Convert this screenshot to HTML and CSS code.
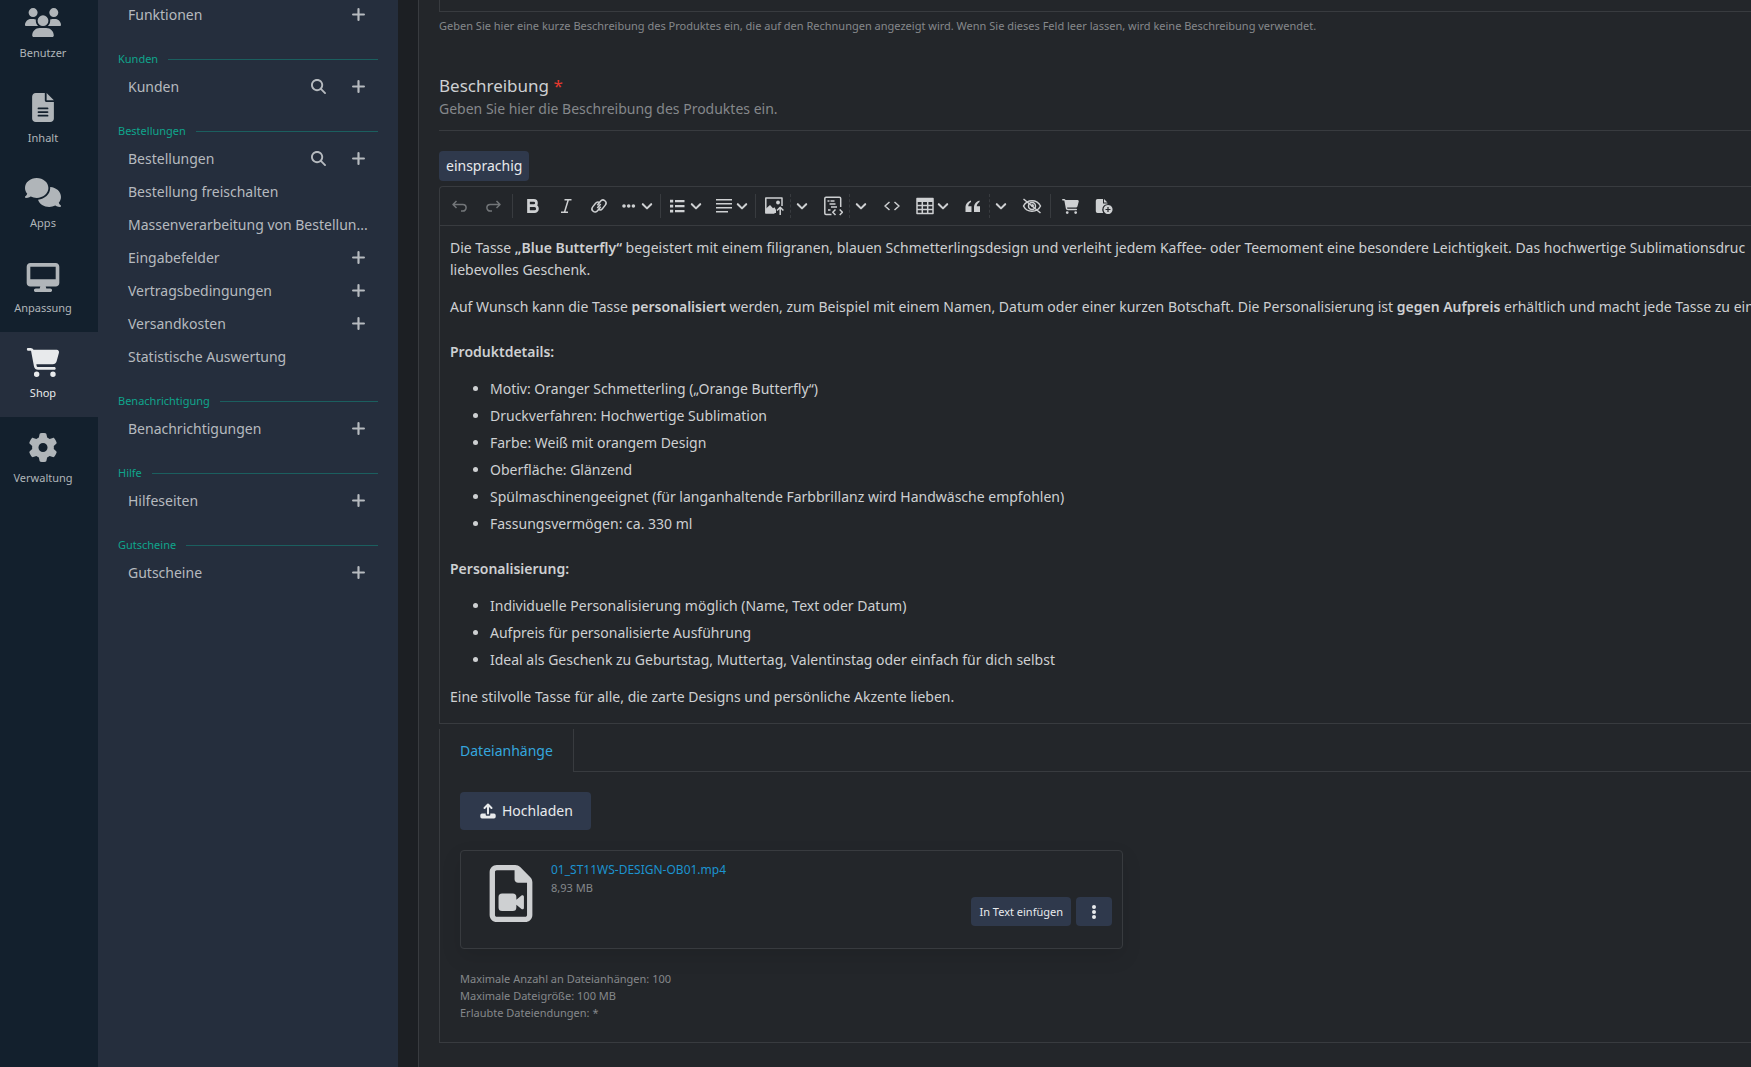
FILE: index.html
```html
<!DOCTYPE html>
<html lang="de">
<head>
  <meta charset="UTF-8">
  <meta name="viewport" content="width=device-width, initial-scale=1.0">
  <title>Produkt bearbeiten</title>
  <link rel="stylesheet" href="styles.css">
</head>
<body>
  <!-- shared icons -->
  <svg class="sprite" aria-hidden="true">
    <symbol id="plus" viewBox="0 0 12 12"><path d="M6 1v10M1 6h10" stroke="currentColor" stroke-width="2" stroke-linecap="round"/></symbol>
    <symbol id="search" viewBox="0 0 512 512"><path d="M416 208c0 45.900-14.900 88.300-40 122.700L502.600 457.400c12.500 12.500 12.500 32.800 0 45.300s-32.800 12.500-45.300 0L330.700 376c-34.400 25.200-76.800 40-122.700 40C93.100 416 0 322.900 0 208S93.100 0 208 0S416 93.100 416 208zM208 352a144 144 0 1 0 0-288 144 144 0 1 0 0 288z" fill="currentColor"/></symbol>
    <symbol id="chevron" viewBox="0 0 10 10"><path d="M1.500 3.500L5 7l3.500-3.500" fill="none" stroke="currentColor" stroke-width="1.700" stroke-linecap="round" stroke-linejoin="round"/></symbol>
    <symbol id="cart" viewBox="0 0 576 512"><path d="M0 24C0 10.700 10.700 0 24 0H69.500c22 0 41.500 12.800 50.600 32h411c26.300 0 45.500 25 38.600 50.400l-41 152.300c-8.500 31.400-37 53.300-69.500 53.300H170.700l5.400 28.500c2.200 11.300 12.100 19.500 23.600 19.500H488c13.300 0 24 10.700 24 24s-10.700 24-24 24H199.700c-34.600 0-64.300-24.600-70.700-58.500L77.400 54.500c-.7-3.800-4-6.500-7.900-6.500H24C10.700 48 0 37.300 0 24zM128 464a48 48 0 1 1 96 0 48 48 0 1 1-96 0zm336-48a48 48 0 1 1 0 96 48 48 0 1 1 0-96z" fill="currentColor"/></symbol>
  </svg>

  <nav class="rail">
    <a href="#">
      <svg viewBox="0 0 640 512"><path d="M144 160A80 80 0 1 0 144 0a80 80 0 1 0 0 160zm368 0A80 80 0 1 0 512 0a80 80 0 1 0 0 160zM0 298.700C0 310.400 9.600 320 21.300 320H234.700c.2 0 .4 0 .7 0c-26.600-23.500-43.300-57.800-43.300-96c0-7.600 .7-15 1.900-22.300c-13.600-6.300-28.700-9.700-44.600-9.700H106.700C47.800 192 0 239.800 0 298.700zM405.300 320H618.700c11.800 0 21.300-9.600 21.300-21.300C640 239.800 592.200 192 533.300 192H490.700c-15.900 0-31 3.500-44.600 9.700c1.300 7.200 1.900 14.700 1.900 22.300c0 38.200-16.800 72.500-43.300 96c.2 0 .4 0 .7 0zM224 224a96 96 0 1 1 192 0 96 96 0 1 1-192 0zM128 485.300C128 411.700 187.700 352 261.300 352H378.700C452.300 352 512 411.700 512 485.300c0 14.700-11.900 26.700-26.700 26.700H154.700c-14.700 0-26.700-11.900-26.700-26.700z"/></svg>
      Benutzer
    </a>
    <a href="#">
      <svg viewBox="0 0 384 512"><path d="M64 0C28.700 0 0 28.700 0 64V448c0 35.300 28.700 64 64 64H320c35.300 0 64-28.700 64-64V160H256c-17.700 0-32-14.300-32-32V0H64zM256 0V128H384L256 0zM112 256H272c8.800 0 16 7.200 16 16s-7.200 16-16 16H112c-8.800 0-16-7.200-16-16s7.200-16 16-16zm0 64H272c8.800 0 16 7.200 16 16s-7.200 16-16 16H112c-8.800 0-16-7.200-16-16s7.200-16 16-16zm0 64H272c8.800 0 16 7.200 16 16s-7.200 16-16 16H112c-8.800 0-16-7.200-16-16s7.200-16 16-16z"/></svg>
      Inhalt
    </a>
    <a href="#">
      <svg viewBox="0 0 640 512"><path d="M208 352c114.900 0 208-78.800 208-176S322.900 0 208 0S0 78.800 0 176c0 38.600 14.700 74.300 39.600 103.400c-3.500 9.400-8.700 17.700-14.200 24.700c-4.800 6.200-9.700 11-13.300 14.300c-1.800 1.600-3.300 2.900-4.300 3.700l-1.300 1C1 327.200-1.400 334.400 .8 340.900S9.100 352 16 352c21.800 0 43.800-5.600 62.100-12.500c9.200-3.500 17.800-7.400 25.200-11.400C134.100 343.300 169.800 352 208 352zM448 176c0 112.300-99.100 196.900-216.500 207C255.800 457.400 336.400 512 432 512c38.200 0 73.900-8.700 104.700-23.900c7.500 4 16 7.900 25.200 11.400c18.300 6.900 40.300 12.500 62.100 12.500c6.900 0 13.100-4.500 15.200-11.100c2.100-6.600-.2-13.800-5.800-17.900l-1.300-1c-1-.8-2.500-2-4.300-3.700c-3.600-3.300-8.500-8.100-13.300-14.300c-5.500-7-10.700-15.400-14.200-24.700c24.900-29 39.600-64.700 39.600-103.400c0-92.800-84.900-168.900-192.600-175.500c.4 5.100 .6 10.300 .6 15.500z"/></svg>
      Apps
    </a>
    <a href="#">
      <svg viewBox="0 0 576 512"><path d="M64 0C28.700 0 0 28.700 0 64V352c0 35.300 28.700 64 64 64H240l-10.700 32H160c-17.700 0-32 14.300-32 32s14.300 32 32 32H416c17.700 0 32-14.300 32-32s-14.300-32-32-32H346.700L336 416H512c35.300 0 64-28.700 64-64V64c0-35.300-28.700-64-64-64H64zM512 64V288H64V64H512z"/></svg>
      Anpassung
    </a>
    <a href="#" class="active">
      <svg viewBox="0 0 576 512"><use href="#cart"/></svg>
      Shop
    </a>
    <a href="#">
      <svg viewBox="0 0 512 512"><path d="M495.900 166.600c3.200 8.700 .5 18.400-6.400 24.600l-43.300 39.400c1.100 8.300 1.700 16.800 1.700 25.400s-.6 17.100-1.700 25.400l43.300 39.400c6.900 6.200 9.600 15.900 6.400 24.600c-4.400 11.900-9.700 23.300-15.800 34.300l-4.700 8.100c-6.600 11-14 21.400-22.100 31.200c-5.900 7.200-15.700 9.600-24.500 6.800l-55.700-17.700c-13.400 10.300-28.200 18.900-44 25.400l-12.500 57.100c-2 9.100-9 16.300-18.200 17.800c-13.800 2.300-28 3.500-42.500 3.500s-28.700-1.200-42.500-3.500c-9.200-1.500-16.200-8.700-18.200-17.800l-12.500-57.100c-15.800-6.500-30.600-15.100-44-25.400L83.100 425.900c-8.800 2.800-18.600 .3-24.500-6.800c-8.100-9.800-15.500-20.200-22.100-31.200l-4.700-8.100c-6.100-11-11.400-22.400-15.800-34.300c-3.200-8.700-.5-18.400 6.400-24.600l43.300-39.400C64.600 273.100 64 264.600 64 256s.6-17.100 1.700-25.400L22.400 191.200c-6.900-6.200-9.600-15.900-6.400-24.600c4.400-11.900 9.700-23.300 15.800-34.300l4.700-8.100c6.600-11 14-21.400 22.100-31.200c5.900-7.200 15.700-9.600 24.500-6.800l55.700 17.700c13.400-10.300 28.200-18.900 44-25.400l12.500-57.100c2-9.100 9-16.300 18.200-17.800C227.300 1.200 241.500 0 256 0s28.700 1.200 42.500 3.500c9.200 1.500 16.200 8.700 18.200 17.800l12.500 57.100c15.800 6.500 30.600 15.100 44 25.400l55.700-17.700c8.800-2.800 18.600-.3 24.500 6.800c8.100 9.800 15.500 20.200 22.100 31.200l4.700 8.100c6.100 11 11.400 22.400 15.800 34.300zM256 336a80 80 0 1 0 0-160 80 80 0 1 0 0 160z"/></svg>
      Verwaltung
    </a>
  </nav>

  <nav class="submenu">
    <section>
      <div class="row"><a href="#">Funktionen</a><button aria-label="Hinzufügen"><svg><use href="#plus"/></svg></button></div>
    </section>
    <section>
      <h2>Kunden</h2>
      <div class="row"><a href="#">Kunden</a><button aria-label="Suchen"><svg class="search"><use href="#search"/></svg></button><button aria-label="Hinzufügen"><svg><use href="#plus"/></svg></button></div>
    </section>
    <section>
      <h2>Bestellungen</h2>
      <div class="row"><a href="#">Bestellungen</a><button aria-label="Suchen"><svg class="search"><use href="#search"/></svg></button><button aria-label="Hinzufügen"><svg><use href="#plus"/></svg></button></div>
      <div class="row"><a href="#">Bestellung freischalten</a></div>
      <div class="row"><a href="#">Massenverarbeitung von Bestellun...</a></div>
      <div class="row"><a href="#">Eingabefelder</a><button aria-label="Hinzufügen"><svg><use href="#plus"/></svg></button></div>
      <div class="row"><a href="#">Vertragsbedingungen</a><button aria-label="Hinzufügen"><svg><use href="#plus"/></svg></button></div>
      <div class="row"><a href="#">Versandkosten</a><button aria-label="Hinzufügen"><svg><use href="#plus"/></svg></button></div>
      <div class="row"><a href="#">Statistische Auswertung</a></div>
    </section>
    <section>
      <h2>Benachrichtigung</h2>
      <div class="row"><a href="#">Benachrichtigungen</a><button aria-label="Hinzufügen"><svg><use href="#plus"/></svg></button></div>
    </section>
    <section>
      <h2>Hilfe</h2>
      <div class="row"><a href="#">Hilfeseiten</a><button aria-label="Hinzufügen"><svg><use href="#plus"/></svg></button></div>
    </section>
    <section>
      <h2>Gutscheine</h2>
      <div class="row"><a href="#">Gutscheine</a><button aria-label="Hinzufügen"><svg><use href="#plus"/></svg></button></div>
    </section>
  </nav>

  <main>
    <input type="text" class="short-text" aria-label="Kurze Beschreibung">
    <small class="hint">Geben Sie hier eine kurze Beschreibung des Produktes ein, die auf den Rechnungen angezeigt wird. Wenn Sie dieses Feld leer lassen, wird keine Beschreibung verwendet.</small>

    <header class="section-head">
      <h1>Beschreibung <span class="required">*</span></h1>
      <p>Geben Sie hier die Beschreibung des Produktes ein.</p>
    </header>

    <button class="button language">einsprachig</button>

    <div class="editor">
      <div class="toolbar">
        <div class="group">
          <button class="tool off" aria-label="Rückgängig"><svg viewBox="0 0 20 20"><path class="line" d="M6.500 5L3 8.500 6.500 12M3.500 8.500h9.300a3.300 3.300 0 0 1 0 6.600H11"/></svg></button>
          <button class="tool off" aria-label="Wiederherstellen"><svg viewBox="0 0 20 20"><path class="line" d="M13.500 5L17 8.500 13.500 12M16.500 8.500H7.200a3.300 3.300 0 0 0 0 6.600H9"/></svg></button>
        </div>
        <div class="group">
          <button class="tool" aria-label="Fett"><svg viewBox="0 0 20 20"><path fill="none" stroke="currentColor" stroke-width="2.700" d="M5.500 4.400h5.300a2.600 2.600 0 0 1 0 5.300H5.500zM5.500 9.700h6a2.900 2.900 0 0 1 0 5.900h-6z"/></svg></button>
          <button class="tool" aria-label="Kursiv"><svg viewBox="0 0 20 20"><path class="line" d="M8.500 3.700h7M5 16.300h7M12.300 3.700L8.500 16.300"/></svg></button>
          <button class="tool" aria-label="Link"><svg viewBox="0 0 20 20"><path class="line" d="M8.300 9.200l3.200-4a3 3 0 0 1 4.800 3.900l-2.900 3.600a3 3 0 0 1-4.200.5M11.700 10.800l-3.200 4a3 3 0 0 1-4.800-3.900l2.900-3.600a3 3 0 0 1 4.200-.5M8.300 12l3.400-4"/></svg></button>
          <button class="drop" aria-label="Mehr"><svg viewBox="0 0 20 20"><circle cx="5" cy="10" r="1.800"/><circle cx="9.700" cy="10" r="1.800"/><circle cx="14.400" cy="10" r="1.800"/></svg><svg class="chev"><use href="#chevron"/></svg></button>
        </div>
        <div class="group">
          <button class="drop" aria-label="Liste"><svg viewBox="0 0 20 20"><path d="M7 4h9.500v2.200H7zM7 9h9.500v2.200H7zM7 14h9.500v2.200H7zM2 3.700h3.200v2.800H2zM2 8.700h3.200v2.800H2zM2 13.700h3.200v2.800H2z"/></svg><svg class="chev"><use href="#chevron"/></svg></button>
          <button class="drop" aria-label="Ausrichtung"><svg viewBox="0 0 20 20"><path d="M2 3h16v1.500H2zM2 7h16v1.500H2zM2 11h16v1.500H2zM2 15h12v1.500H2z"/></svg><svg class="chev"><use href="#chevron"/></svg></button>
        </div>
        <div class="group wide">
          <div class="split">
            <button class="tool" aria-label="Bild"><svg viewBox="0 0 20 20"><path class="line" d="M10.500 17H1.800V2H18v8"/><path d="M2 17v-4.500L6 9l3 3.300 1.500-1L12 14v3z"/><circle cx="14" cy="6.500" r="1.900"/><path class="line" d="M16.200 19v-7.500M13 14.500l3.200-3.200 3.200 3.200"/></svg></button>
            <button class="arrow" aria-label="Bild Optionen"><svg class="chev"><use href="#chevron"/></svg></button>
          </div>
          <div class="split">
            <button class="tool" aria-label="Vorlage"><svg viewBox="0 0 20 20"><path class="line" d="M8.500 18.500H3a1.200 1.200 0 0 1-1.200-1.200V2.500A1.200 1.200 0 0 1 3 1.300h13.500a1.200 1.200 0 0 1 1.200 1.200V11M4.500 5h2M7.500 5h4M6.500 8h6M8 11h6M5 14h2.500M12.500 13.500L9.800 16.300l2.700 2.700M16.700 13.500l2.700 2.800-2.700 2.700"/></svg></button>
            <button class="arrow" aria-label="Vorlage Optionen"><svg class="chev"><use href="#chevron"/></svg></button>
          </div>
          <button class="tool" aria-label="Code"><svg viewBox="0 0 20 20"><path class="line" d="M7.500 6L3 10l4.500 4M12.500 6l4.500 4-4.500 4"/></svg></button>
          <button class="drop" aria-label="Tabelle"><svg viewBox="0 0 20 20"><path class="line" d="M2 2.500h16v15H2zM7.300 5v12M12.700 5v12M2 9.500h16M2 13.500h16"/><path d="M2 2h16v4H2z"/></svg><svg class="chev"><use href="#chevron"/></svg></button>
          <div class="split">
            <button class="tool" aria-label="Zitat"><svg viewBox="0 0 20 20"><path d="M8 4.500C4.800 5.300 2.500 8 2.500 11.500V16h6v-5.800H5.200C5.500 8.300 6.500 6.800 8 6zM16.500 4.500c-3.200.8-5.500 3.500-5.500 7V16h6v-5.800h-3.300c.3-1.900 1.300-3.400 2.800-4.200z"/></svg></button>
            <button class="arrow" aria-label="Zitat Optionen"><svg class="chev"><use href="#chevron"/></svg></button>
          </div>
          <button class="tool" aria-label="Spoiler"><svg viewBox="0 0 20 20"><path class="line" d="M1.500 10C5 3 15 3 18.500 10 15 17 5 17 1.500 10zM1.500 3l17 14"/><circle class="line" cx="10" cy="10" r="3.500"/><circle cx="10.500" cy="9.500" r="1.500"/></svg></button>
        </div>
        <div class="group last">
          <button class="tool" aria-label="Produkt"><svg class="small"><use href="#cart"/></svg></button>
          <button class="tool" aria-label="Seite"><svg viewBox="0 0 20 20"><path d="M3.500 3H9v4.500h4.500v.8a5.500 5.500 0 0 0-4.300 8.700H3.500A1.700 1.700 0 0 1 1.800 15.300V4.700A1.700 1.700 0 0 1 3.500 3zM10 3l3.500 3.500H10z"/><path fill-rule="evenodd" d="M14 9a4.500 4.500 0 1 0 .1 0zM13.400 11h1.200v1.900h1.900v1.200h-1.900V16h-1.200v-1.900h-1.900v-1.200h1.900z"/></svg></button>
        </div>
      </div>

      <article class="content">
        <p class="nowrap">Die Tasse <b>„Blue Butterfly“</b> begeistert mit einem filigranen, blauen Schmetterlingsdesign und verleiht jedem Kaffee- oder Teemoment eine besondere Leichtigkeit. Das hochwertige Sublimationsdruc<br>liebevolles Geschenk.</p>
        <p class="nowrap">Auf Wunsch kann die Tasse <b>personalisiert</b> werden, zum Beispiel mit einem Namen, Datum oder einer kurzen Botschaft. Die Personalisierung ist <b>gegen Aufpreis</b> erhältlich und macht jede Tasse zu ein</p>
        <h3>Produktdetails:</h3>
        <ul>
          <li>Motiv: Oranger Schmetterling („Orange Butterfly“)</li>
          <li>Druckverfahren: Hochwertige Sublimation</li>
          <li>Farbe: Weiß mit orangem Design</li>
          <li>Oberfläche: Glänzend</li>
          <li>Spülmaschinengeeignet (für langanhaltende Farbbrillanz wird Handwäsche empfohlen)</li>
          <li>Fassungsvermögen: ca. 330 ml</li>
        </ul>
        <h3>Personalisierung:</h3>
        <ul>
          <li>Individuelle Personalisierung möglich (Name, Text oder Datum)</li>
          <li>Aufpreis für personalisierte Ausführung</li>
          <li>Ideal als Geschenk zu Geburtstag, Muttertag, Valentinstag oder einfach für dich selbst</li>
        </ul>
        <p>Eine stilvolle Tasse für alle, die zarte Designs und persönliche Akzente lieben.</p>
      </article>
    </div>

    <div class="tabs">
      <button class="tab">Dateianhänge</button>
      <span class="tab-rest"></span>
    </div>
    <section class="attachments">
      <button class="button upload">
        <svg viewBox="0 0 16 16"><path fill="none" stroke="currentColor" stroke-width="2" stroke-linecap="round" stroke-linejoin="round" d="M8 10.500V2M4.500 5L8 1.500 11.500 5"/><path fill="currentColor" d="M2 10.500h3.700v1.200a1 1 0 0 0 1 1h2.600a1 1 0 0 0 1-1v-1.200H14a1.700 1.700 0 0 1 1.700 1.700v1.600a1.700 1.700 0 0 1-1.700 1.700H2a1.700 1.700 0 0 1-1.700-1.700v-1.600A1.700 1.700 0 0 1 2 10.500z"/></svg>
        Hochladen
      </button>

      <div class="file">
        <svg class="file-icon" viewBox="0 0 384 512"><path fill="currentColor" fill-rule="evenodd" d="M64 0C28.700 0 0 28.700 0 64v384c0 35.300 28.700 64 64 64h256c35.300 0 64-28.700 64-64V154.500c0-17-6.700-33.300-18.700-45.300l-90.500-90.500C262.800 6.700 246.500 0 229.500 0zM64 48h160v80c0 17.700 14.300 32 32 32h80v288c0 8.800-7.200 16-16 16H64c-8.800 0-16-7.200-16-16V64c0-8.800 7.200-16 16-16z"/><path fill="currentColor" d="M112 256h96a32 32 0 0 1 32 32v24l46-37c10-7 22-1 22 11v98c0 12-12 18-22 11l-46-37v24a32 32 0 0 1-32 32h-96a32 32 0 0 1-32-32v-94a32 32 0 0 1 32-32z"/></svg>
        <div class="file-info">
          <a href="#">01_ST11WS-DESIGN-OB01.mp4</a>
          <small>8,93 MB</small>
          <div class="file-actions">
            <button class="button">In Text einfügen</button>
            <button class="button more" aria-label="Weitere Optionen"><svg viewBox="0 0 4 14"><circle cx="2" cy="2" r="2"/><circle cx="2" cy="7" r="2"/><circle cx="2" cy="12" r="2"/></svg></button>
          </div>
        </div>
      </div>

      <p class="limits">Maximale Anzahl an Dateianhängen: 100<br>Maximale Dateigröße: 100 MB<br>Erlaubte Dateiendungen: *</p>
    </section>
  </main>
</body>
</html>
```
FILE: styles.css
```css
* {
  box-sizing: border-box;
}

html, body {
  margin: 0;
  height: 100%;
  overflow: hidden;
}

body {
  display: flex;
  background-color: #1c1f23;
  color: #ced0d2;
  font-family: "Noto Sans", "Open Sans", sans-serif;
  font-size: 14px;
  line-height: 22px;
}

h1, h2, h3, p, ul {
  margin: 0;
}

a {
  color: inherit;
  text-decoration: none;
}

button {
  padding: 0;
  border: none;
  background: none;
  color: inherit;
  font: inherit;
  cursor: pointer;
}

.sprite {
  position: absolute;
  width: 0;
  height: 0;
}

/* left icon bar, scrolled by a few pixels */
.rail {
  flex: 0 0 98px;
  margin-top: -8px;
  background-color: #13202d;
}

.rail a {
  display: flex;
  flex-direction: column;
  align-items: center;
  gap: 5px;
  height: 85px;
  padding: 16px 12px 0 0;
  color: #b0b5b9;
  font-size: 11px;
}

.rail svg {
  width: 36px;
  height: 29px;
  fill: currentColor;
}

.rail a.active {
  background-color: #252e3d;
  color: #e8eaec;
}

.submenu {
  flex: 0 0 300px;
  margin-top: -2px;
  padding: 0 20px;
  background-color: #252e3d;
}

.submenu section {
  margin-bottom: 17px;
}

.submenu h2 {
  display: flex;
  align-items: center;
  gap: 10px;
  color: #0fa58c;
  font-size: 11px;
  font-weight: 400;
}

.submenu h2::after {
  content: "";
  flex: 1;
  height: 1px;
  background-color: #1b5f5f;
}

.row {
  display: flex;
  height: 33px;
  padding-left: 10px;
  color: #b6babf;
  line-height: 33px;
}

.row a {
  flex: 1;
  white-space: nowrap;
}

.row button {
  display: flex;
  align-items: center;
  justify-content: center;
  width: 40px;
}

.row svg {
  width: 13px;
  height: 13px;
}

.row .search {
  width: 15px;
  height: 15px;
}

main {
  flex: 1;
  min-width: 0;
  margin-left: 20px;
  padding-left: 20px;
  border-left: 1px solid #383b3f;
  background-color: #23262a;
}

.short-text {
  display: block;
  width: 100%;
  height: 12px;
  border: 1px solid #383b3f;
  border-width: 0 0 1px 1px;
  background: none;
  color: inherit;
}

.hint {
  display: block;
  margin-top: 3px;
  color: #85888b;
  font-size: 11px;
  white-space: nowrap;
}

.section-head {
  margin: 37px 0 20px;
  padding-bottom: 10px;
  border-bottom: 1px solid #383b3f;
  color: #85888b;
}

.section-head h1 {
  color: #ced0d2;
  font-size: 17px;
  font-weight: 400;
  line-height: 24px;
}

.required {
  color: #e5392f;
}

.button {
  border-radius: 4px;
  background-color: #2f394c;
  color: #e8eaec;
}

.language {
  display: block;
  height: 30px;
  padding: 0 7px;
}

.editor {
  margin-top: 5px;
  border: 1px solid #383b3f;
  border-right: none;
  border-top-left-radius: 4px;
}

.toolbar {
  display: flex;
  align-items: center;
  height: 39px;
  border-bottom: 1px solid #383b3f;
}

.group {
  display: flex;
  padding: 0 3px;
  border-right: 1px solid #383b3f;
}

.group.wide {
  gap: 3px;
  padding: 0 2px 0 1px;
}

.group.last {
  border-right: none;
}

.group button {
  display: flex;
  align-items: center;
  justify-content: center;
  height: 24px;
}

.group .off {
  color: #727578;
}

.group svg {
  width: 20px;
  height: 20px;
  fill: currentColor;
}

.group .small {
  width: 17px;
  height: 15px;
}

.group .chev {
  width: 12px;
  height: 12px;
}

.group .line {
  fill: none;
  stroke: currentColor;
  stroke-width: 1.5;
  stroke-linejoin: round;
}

.tool {
  width: 33px;
}

.group .drop {
  gap: 2px;
  width: 42px;
}

.drop + .drop {
  margin-left: 4px;
}

.split {
  display: flex;
}

.split .arrow {
  width: 23px;
  border-left: 1px dashed #383b3f;
}

.content {
  padding: 11px 0 15px 10px;
}

.content p + p, .content ul {
  margin-top: 15px;
}

.content h3 {
  margin-top: 23px;
  font-size: 14px;
  font-weight: 600;
}

.content b {
  font-weight: 600;
}

.content .nowrap {
  white-space: nowrap;
}

.content ul {
  padding-left: 40px;
}

.content li {
  margin-bottom: 5px;
}

.content ul + p {
  margin-top: 15px;
}

.content li:last-child {
  margin-bottom: 0;
}

.tabs {
  display: flex;
  height: 43px;
  margin-top: 5px;
}

.tab {
  padding: 0 20px;
  border: 1px solid #383b3f;
  border-width: 0 1px 0 1px;
  color: #35a6de;
}

.tab-rest {
  flex: 1;
  border-bottom: 1px solid #383b3f;
}

.attachments {
  padding: 20px 0 21px 20px;
  border: 1px solid #383b3f;
  border-width: 0 0 1px 1px;
}

.upload {
  display: flex;
  align-items: center;
  gap: 6px;
  height: 38px;
  padding: 0 18px 0 20px;
}

.upload svg {
  width: 16px;
  height: 16px;
}

.file {
  display: flex;
  gap: 18px;
  max-width: 663px;
  margin-top: 20px;
  padding: 10px 10px 22px 28px;
  border: 1px solid #383b3f;
  border-radius: 4px;
  box-shadow: 0 8px 20px rgba(0, 0, 0, 0.1);
}

.file-icon {
  width: 44px;
  height: 57px;
  margin-top: 4px;
}

.file-info {
  display: flex;
  flex: 1;
  flex-direction: column;
  font-size: 12px;
  line-height: 18px;
}

.file-info > a {
  color: #1c93cf;
}

.file-info small {
  color: #85888b;
  font-size: 11px;
}

.file-actions {
  display: flex;
  justify-content: flex-end;
  gap: 5px;
}

.file-actions .button {
  height: 29px;
  padding: 0 8px;
  font-size: 11px;
}

.file-actions .more {
  display: flex;
  align-items: center;
  justify-content: center;
  width: 36px;
}

.more svg {
  width: 4px;
  height: 14px;
  fill: currentColor;
}

.limits {
  margin-top: 21px;
  color: #85888b;
  font-size: 11px;
  line-height: 17px;
}
```
